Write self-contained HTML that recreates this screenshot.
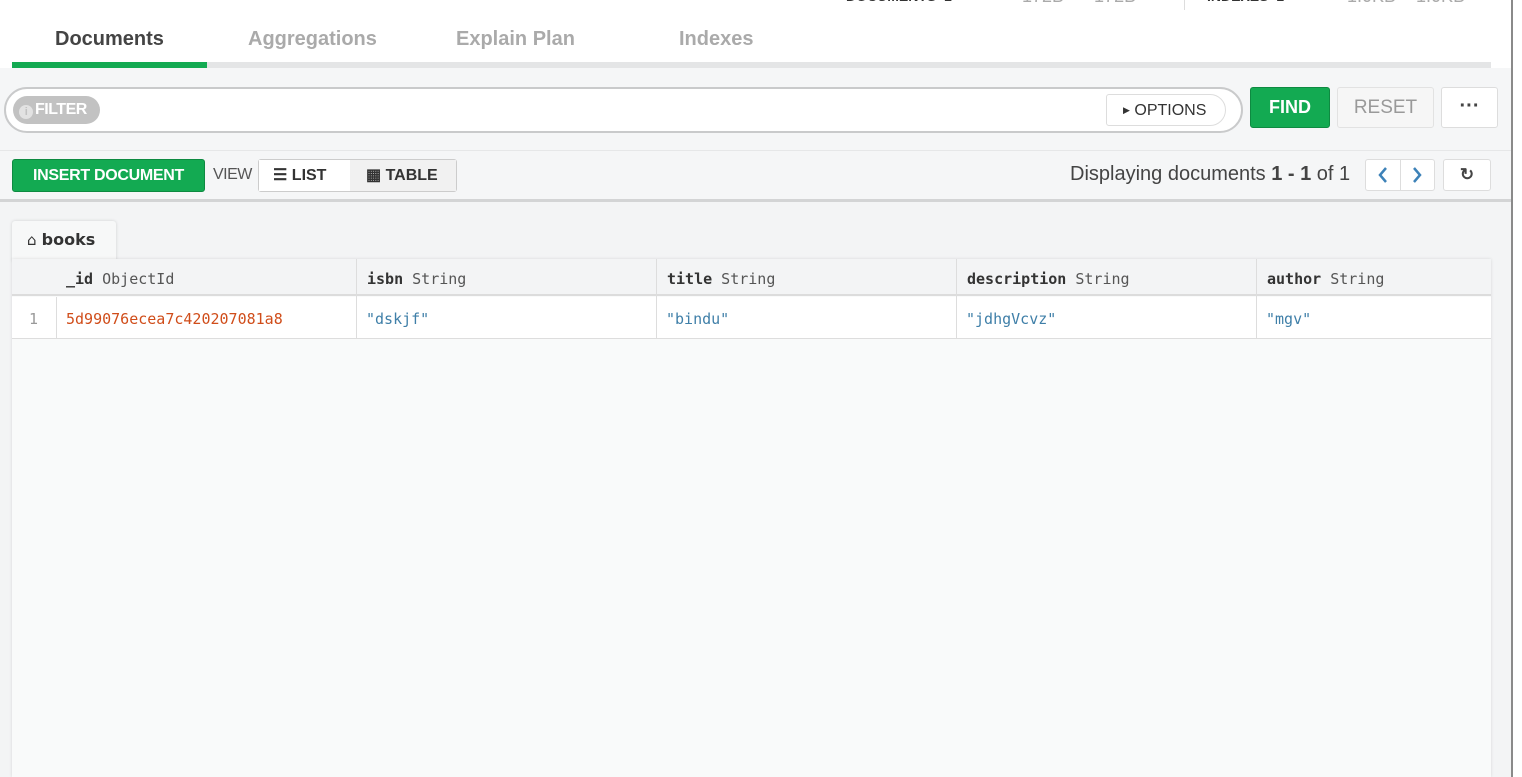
<!DOCTYPE html>
<html><head><meta charset="utf-8"><style>
*{box-sizing:border-box;margin:0;padding:0}
body{width:1522px;height:777px;overflow:hidden;background:#fff;font-family:"Liberation Sans",sans-serif;position:relative}
.abs{position:absolute}
.mono{font-family:"DejaVu Sans Mono","Liberation Mono",monospace}
</style></head><body>
<div class="abs" style="left:10px;top:-33px;font-size:30px;color:#3d82b8;white-space:nowrap">library.books</div>
<div class="abs" style="left:846px;top:-12px;font-size:14px;font-weight:bold;color:#333;white-space:nowrap">DOCUMENTS&nbsp; 1</div>
<div class="abs" style="left:1022px;top:-14px;font-size:18px;color:#aaa;white-space:nowrap">172B&nbsp;&nbsp;&nbsp;&nbsp;&nbsp; 172B</div>
<div class="abs" style="left:1184px;top:0;width:1px;height:10px;background:#ddd"></div>
<div class="abs" style="left:1207px;top:-12px;font-size:14px;font-weight:bold;color:#333;white-space:nowrap">INDEXES&nbsp; 1</div>
<div class="abs" style="left:1347px;top:-14px;font-size:18px;color:#aaa;white-space:nowrap">1.0KB&nbsp;&nbsp;&nbsp; 1.0KB</div>
<div class="abs" style="left:1511px;top:0;width:2px;height:777px;background:#8a8a8a"></div>
<div class="abs" style="left:12px;top:62px;width:1479px;height:6px;background:#e4e5e6"></div>
<div class="abs" style="left:12px;top:62px;width:195px;height:6px;background:#13aa52"></div>
<div class="abs" style="left:55px;top:28px;font-size:20px;font-weight:bold;color:#444">Documents</div>
<div class="abs" style="left:248px;top:28px;font-size:20px;font-weight:bold;color:#aaa">Aggregations</div>
<div class="abs" style="left:456px;top:28px;font-size:20px;font-weight:bold;color:#aaa">Explain Plan</div>
<div class="abs" style="left:679px;top:28px;font-size:20px;font-weight:bold;color:#aaa">Indexes</div>
<div class="abs" style="left:0;top:68px;width:1511px;height:132px;background:#f5f6f7"></div>
<div class="abs" style="left:0;top:150px;width:1511px;height:1px;background:#e6e7e8"></div>
<div class="abs" style="left:0;top:199px;width:1511px;height:3px;background:#d3d4d5"></div>
<div class="abs" style="left:4px;top:87px;width:1239px;height:46px;border:2px solid #c9cacb;border-radius:23px;background:#fff"></div>
<div class="abs" style="left:13px;top:96px;width:87px;height:28px;border-radius:14px;background:#c2c2c2;color:#fff;font-size:16px;font-weight:bold;line-height:28px;padding-left:6px;letter-spacing:-0.5px"><span style="display:inline-block;width:14px;height:14px;border-radius:7px;background:#e2e2e2;color:#c2c2c2;font-size:11px;line-height:14px;text-align:center;vertical-align:-1px;margin-right:2px">i</span>FILTER</div>
<div class="abs" style="left:1106px;top:94px;width:120px;height:32px;border:1px solid #ddd;border-radius:3px 16px 16px 3px;background:#fff;font-size:16px;color:#333;line-height:30px;padding-left:16px"><span style="font-size:9px;vertical-align:2px">&#9654;</span> OPTIONS</div>
<div class="abs" style="left:1250px;top:87px;width:80px;height:41px;background:#13aa52;border:1px solid #0e8a41;border-radius:3px;color:#fff;font-size:18px;font-weight:bold;text-align:center;line-height:39px">FIND</div>
<div class="abs" style="left:1337px;top:87px;width:97px;height:41px;background:#f6f6f6;border:1px solid #e2e2e2;border-radius:3px;color:#999;font-size:19px;text-align:center;line-height:39px">RESET</div>
<div class="abs" style="left:1441px;top:87px;width:57px;height:41px;background:#fff;border:1px solid #ddd;border-radius:3px;color:#444;font-size:20px;font-weight:bold;text-align:center;line-height:36px">&middot;&middot;&middot;</div>
<div class="abs" style="left:12px;top:159px;width:193px;height:33px;background:#13aa52;border:1px solid #0e8a41;border-radius:3px;color:#fff;font-size:16px;font-weight:bold;text-align:center;line-height:31px;letter-spacing:-0.3px">INSERT DOCUMENT</div>
<div class="abs" style="left:213px;top:166px;font-size:16px;color:#555;letter-spacing:-0.5px">VIEW</div>
<div class="abs" style="left:258px;top:159px;width:199px;height:33px;border:1px solid #ccc;border-radius:3px;background:#e8e8e8"></div>
<div class="abs" style="left:259px;top:160px;width:91px;height:31px;background:#fff;font-size:16px;font-weight:bold;color:#333;line-height:31px;padding-left:14px">&#9776; LIST</div>
<div class="abs" style="left:350px;top:160px;width:106px;height:31px;background:#f1f1f1;font-size:16px;font-weight:bold;color:#333;line-height:31px;padding-left:16px">&#9638; TABLE</div>
<div class="abs" style="left:1070px;top:163px;font-size:20px;color:#444;white-space:nowrap">Displaying documents <b>1 - 1</b> of 1</div>
<div class="abs" style="left:1365px;top:159px;width:70px;height:32px;border:1px solid #ddd;border-radius:3px;background:#fff"></div>
<div class="abs" style="left:1400px;top:160px;width:1px;height:30px;background:#ddd"></div>
<svg class="abs" style="left:1377px;top:166px" width="12" height="18"><path d="M9 2L3 9L9 16" stroke="#3d82b8" stroke-width="2.5" fill="none"/></svg>
<svg class="abs" style="left:1411px;top:166px" width="12" height="18"><path d="M3 2L9 9L3 16" stroke="#3d82b8" stroke-width="2.5" fill="none"/></svg>
<div class="abs" style="left:1443px;top:159px;width:48px;height:32px;border:1px solid #ddd;border-radius:3px;background:#fff;text-align:center;font-size:17px;font-weight:bold;color:#444;line-height:30px">&#8635;</div>
<div class="abs" style="left:0;top:202px;width:1511px;height:575px;background:#f3f4f5"></div>
<div class="abs" style="left:12px;top:221px;width:104px;height:40px;background:#f7f8f8;border-radius:3px 3px 0 0;box-shadow:0 0 3px rgba(0,0,0,.15)"></div>
<div class="abs" style="left:27px;top:230px;font-size:16px;color:#333;font-family:'DejaVu Sans',sans-serif"><span style="font-size:15px">&#8962;</span> <b style="font-weight:600">books</b></div>
<div class="abs" style="left:12px;top:259px;width:1479px;height:518px;background:#f9fafa;box-shadow:0 0 3px rgba(0,0,0,.12)"></div>
<div class="abs" style="left:12px;top:259px;width:1479px;height:37px;background:#f3f4f5;border-bottom:2px solid #dcdcdc"></div>
<div class="abs" style="left:12px;top:297px;width:1479px;height:42px;background:#fff;border-bottom:1px solid #ddd"></div>
<div class="abs" style="left:56px;top:297px;width:1px;height:42px;background:#ddd"></div>
<div class="abs" style="left:356px;top:259px;width:1px;height:80px;background:#ddd"></div>
<div class="abs" style="left:656px;top:259px;width:1px;height:80px;background:#ddd"></div>
<div class="abs" style="left:956px;top:259px;width:1px;height:80px;background:#ddd"></div>
<div class="abs" style="left:1256px;top:259px;width:1px;height:80px;background:#ddd"></div>
<div class="abs mono" style="left:66px;top:270px;font-size:15px;color:#555"><b style="color:#333">_id</b> ObjectId</div>
<div class="abs mono" style="left:367px;top:270px;font-size:15px;color:#555"><b style="color:#333">isbn</b> String</div>
<div class="abs mono" style="left:667px;top:270px;font-size:15px;color:#555"><b style="color:#333">title</b> String</div>
<div class="abs mono" style="left:967px;top:270px;font-size:15px;color:#555"><b style="color:#333">description</b> String</div>
<div class="abs mono" style="left:1267px;top:270px;font-size:15px;color:#555"><b style="color:#333">author</b> String</div>
<div class="abs mono" style="left:29px;top:310px;font-size:15px;color:#999">1</div>
<div class="abs mono" style="left:66px;top:310px;font-size:15px;color:#d04d1a">5d99076ecea7c420207081a8</div>
<div class="abs mono" style="left:366px;top:310px;font-size:15px;color:#3f7fa8">"dskjf"</div>
<div class="abs mono" style="left:666px;top:310px;font-size:15px;color:#3f7fa8">"bindu"</div>
<div class="abs mono" style="left:966px;top:310px;font-size:15px;color:#3f7fa8">"jdhgVcvz"</div>
<div class="abs mono" style="left:1266px;top:310px;font-size:15px;color:#3f7fa8">"mgv"</div>
</body></html>
